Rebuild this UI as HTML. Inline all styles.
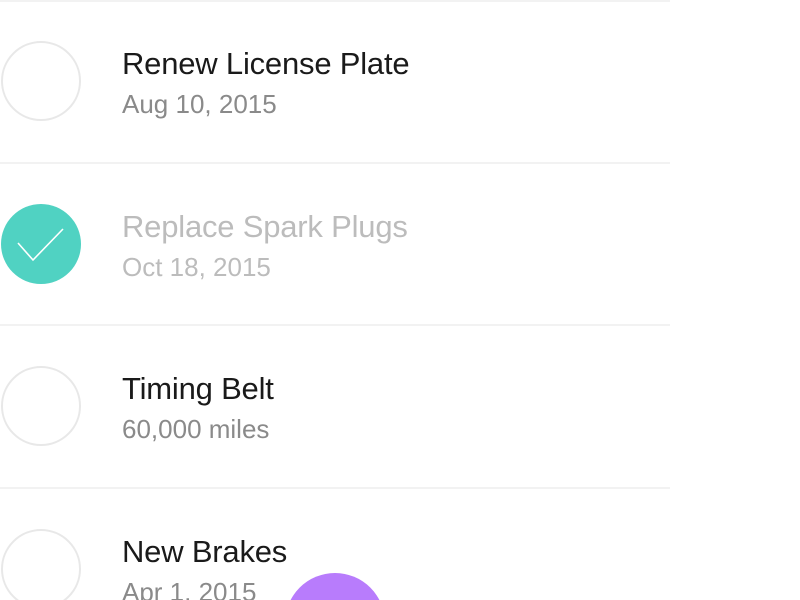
<!DOCTYPE html>
<html><head><meta charset="utf-8"><style>
html,body{margin:0;padding:0;width:800px;height:600px;overflow:hidden;background:#fff;font-family:"Liberation Sans",sans-serif;}
#w{position:relative;width:800px;height:600px;overflow:hidden;}
.sep{position:absolute;left:0;width:670px;height:2px;background:#f2f2f2;}
.c{position:absolute;left:1px;width:76px;height:76px;border:2px solid #e8e8e8;border-radius:50%;}
.t{position:absolute;left:122px;font-size:31px;line-height:31px;letter-spacing:-0.2px;color:#1a1a1a;white-space:nowrap;}
.d{position:absolute;left:122px;font-size:26px;line-height:26px;color:#8a8a8a;white-space:nowrap;}
</style></head><body><div id="w">
<div class="sep" style="top:0"></div>
<div class="c" style="top:41px"></div>
<div class="t" style="top:48px">Renew License Plate</div>
<div class="d" style="top:91px">Aug 10, 2015</div>
<div class="sep" style="top:162px"></div>
<div style="position:absolute;left:1px;top:204px;width:80px;height:80px;border-radius:50%;background:#50d2c2;"></div>
<svg style="position:absolute;left:0;top:203px" width="82" height="82"><polyline points="18,40 33,57 63,26" fill="none" stroke="#fff" stroke-width="1.6"/></svg>
<div class="t" style="top:211px;color:#bcbcbc">Replace Spark Plugs</div>
<div class="d" style="top:254px;color:#bcbcbc">Oct 18, 2015</div>
<div class="sep" style="top:324px"></div>
<div class="c" style="top:366px"></div>
<div class="t" style="top:373px">Timing Belt</div>
<div class="d" style="top:416px">60,000 miles</div>
<div class="sep" style="top:487px"></div>
<div style="position:absolute;left:1px;top:529px;width:80px;height:71px;overflow:hidden"><div style="width:76px;height:76px;border:2px solid #e8e8e8;border-radius:50%"></div></div>
<div class="t" style="top:536px">New Brakes</div>
<div style="position:absolute;left:122px;top:579px;width:200px;height:21px;overflow:hidden;font-size:26px;line-height:26px;color:#8a8a8a;white-space:nowrap">Apr 1, 2015</div>
<svg style="position:absolute;left:285px;top:573px" width="100" height="27"><circle cx="50" cy="50" r="50" fill="#b87cfc"/></svg>
</div></body></html>
